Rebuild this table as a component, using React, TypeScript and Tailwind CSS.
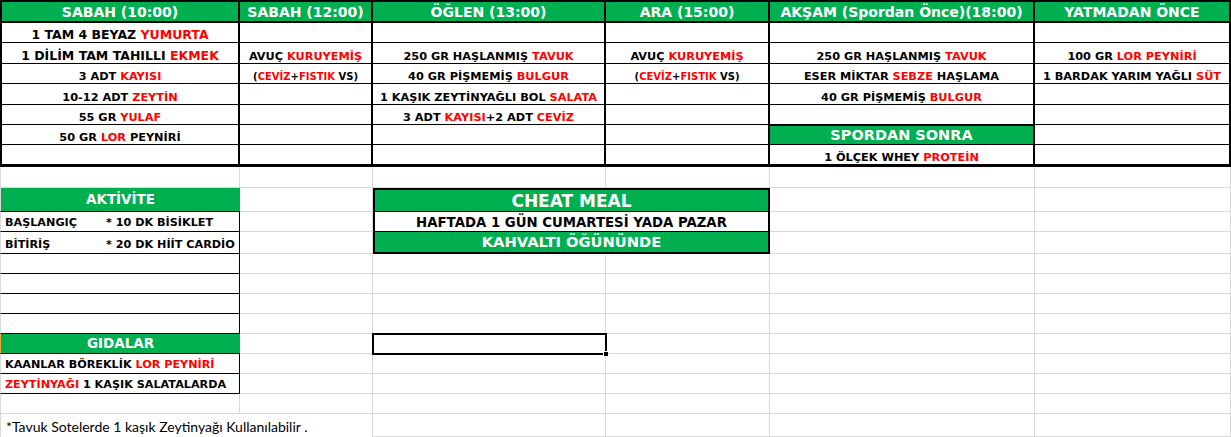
import type { ReactNode } from 'react';
import clsx from 'clsx';

const R = ({ children }: { children: ReactNode }) => <span className="text-[#ff0000]">{children}</span>;

const widths = ['w-[240px]', 'w-[133px]', 'w-[233px]', 'w-[164px]', 'w-[265px]', 'w-[196px]'];
const rowHeights = ['h-[20px]', 'h-[21px]', 'h-[20px]', 'h-[21px]', 'h-[20px]', 'h-[20px]', 'h-[22px]'];

const headers = ['SABAH (10:00)', 'SABAH (12:00)', 'ÖĞLEN (13:00)', 'ARA (15:00)', 'AKŞAM (Spordan Önce)(18:00)', 'YATMADAN ÖNCE'];

const nuts = (
  <span className="text-[10px]">
    (<R>CEVİZ</R>+<R>FISTIK</R> VS)
  </span>
);

const SPOR = 'spor';

const meals: ReactNode[][] = [
  [<span className="text-[12.5px]">1 TAM 4 BEYAZ <R>YUMURTA</R></span>, null, null, null, null, null],
  [
    <span className="text-[12.5px]">1 DİLİM TAM TAHILLI <R>EKMEK</R></span>,
    <>AVUÇ <R>KURUYEMİŞ</R></>,
    <>250 GR HAŞLANMIŞ <R>TAVUK</R></>,
    <>AVUÇ <R>KURUYEMİŞ</R></>,
    <>250 GR HAŞLANMIŞ <R>TAVUK</R></>,
    <>100 GR <R>LOR PEYNİRİ</R></>,
  ],
  [
    <>3 ADT <R>KAYISI</R></>,
    nuts,
    <>40 GR PİŞMEMİŞ <R>BULGUR</R></>,
    nuts,
    <>ESER MİKTAR <R>SEBZE</R> HAŞLAMA</>,
    <>1 BARDAK YARIM YAĞLI <R>SÜT</R></>,
  ],
  [<>10-12 ADT <R>ZEYTİN</R></>, null, <>1 KAŞIK ZEYTİNYAĞLI BOL <R>SALATA</R></>, null, <>40 GR PİŞMEMİŞ <R>BULGUR</R></>, null],
  [<>55 GR <R>YULAF</R></>, null, <>3 ADT <R>KAYISI</R>+2 ADT <R>CEVİZ</R></>, null, null, null],
  [<>50 GR <R>LOR</R> PEYNİRİ</>, null, null, null, SPOR, null],
  [null, null, null, null, <>1 ÖLÇEK WHEY <R>PROTEİN</R></>, null],
];

const colStart = ['col-start-1', 'col-start-2', 'col-start-3', 'col-start-4', 'col-start-5', 'col-start-6'];
const rowStart = [
  'row-start-1', 'row-start-2', 'row-start-3', 'row-start-4', 'row-start-5', 'row-start-6', 'row-start-7',
  'row-start-8', 'row-start-9', 'row-start-10', 'row-start-11', 'row-start-12', 'row-start-13',
];

const activity: [string, string][] = [
  ['BAŞLANGIÇ', '* 10 DK BİSİKLET'],
  ['BİTİRİŞ', '* 20 DK HİİT CARDİO'],
];

export default function App() {
  return (
    <div className="w-[1231px] h-[437px] overflow-hidden bg-white text-black font-['DejaVu_Sans',sans-serif] font-bold">
      {/* Meal plan table */}
      <div className="flex flex-col">
        <div className="flex h-[23px]">
          {headers.map((h, i) => (
            <div
              key={h}
              className={clsx(
                widths[i],
                'flex items-center justify-center pt-px bg-[#00b050] border-y-2 border-r-2 border-black text-[14px] leading-none text-white whitespace-nowrap',
                i === 0 && 'border-l-2'
              )}
            >
              {h}
            </div>
          ))}
        </div>
        {meals.map((row, r) => (
          <div key={r} className={clsx('flex', rowHeights[r])}>
            {row.map((cell, c) =>
              cell === SPOR ? (
                <div
                  key={c}
                  className={clsx(widths[c], 'flex items-center justify-center bg-[#00b050] border-t border-b border-r-2 border-black text-[14.5px] leading-none text-white')}
                >
                  SPORDAN SONRA
                </div>
              ) : (
                <div
                  key={c}
                  className={clsx(
                    widths[c],
                    'flex items-end justify-center pb-px border-r-2 border-black text-[11.3px] leading-none whitespace-nowrap',
                    r === meals.length - 1 ? 'border-b-[3px]' : 'border-b',
                    c === 0 && 'border-l-2'
                  )}
                >
                  <span>{cell}</span>
                </div>
              )
            )}
          </div>
        ))}
      </div>

      {/* Lower sheet area */}
      <div className="grid grid-cols-[240px_133px_233px_164px_265px_196px] grid-rows-[21px_24px_20px_22px_20px_20px_20px_20px_20px_20px_20px_20px_23px]">
        {rowStart.map((rs, r) =>
          colStart.map((cs, c) => (
            <div key={`${r}-${c}`} className={clsx(cs, rs, 'border-r border-b border-[#d9d9d9]', c === 0 && 'border-l')} />
          ))
        )}

        {/* AKTİVİTE block */}
        <div className="col-start-1 row-start-2 flex items-center justify-center pt-px bg-[#00b050] border-b border-l border-b-black border-l-[#d9d9d9] text-[13.5px] leading-none text-white">
          AKTİVİTE
        </div>
        {activity.map(([a, b], i) => (
          <div
            key={a}
            className={clsx(
              'col-start-1 flex items-end pb-[3px] pl-[4px] bg-white border-b border-r border-black border-l border-l-[#d9d9d9] text-[11.2px] leading-none whitespace-nowrap',
              i === 0 ? 'row-start-3' : 'row-start-4'
            )}
          >
            <span className="w-[101px]">{a}</span>
            <span>{b}</span>
          </div>
        ))}
        <div className="col-start-1 row-start-5 bg-white border-b border-r border-black border-l border-l-[#d9d9d9]" />
        <div className="col-start-1 row-start-6 bg-white border-b border-r border-black border-l border-l-[#d9d9d9]" />
        <div className="col-start-1 row-start-7 bg-white border-b border-r border-black border-l border-l-[#d9d9d9]" />
        <div className="col-start-1 row-start-8 bg-white border-b border-r border-black border-l border-l-[#d9d9d9]" />
        <div className="col-start-1 row-start-9 flex items-center justify-center pt-px bg-[#00b050] border-b border-l border-b-black border-l-[#f2a33a] text-[13.5px] leading-none text-white">
          GIDALAR
        </div>
        <div className="col-start-1 row-start-10 flex items-end pb-[3px] pl-[4px] bg-white border-b border-r border-black border-l border-l-[#d9d9d9] text-[11.2px] leading-none whitespace-nowrap">
          <span>
            KAANLAR BÖREKLİK <R>LOR PEYNİRİ</R>
          </span>
        </div>
        <div className="col-start-1 row-start-11 flex items-end pb-[3px] pl-[4px] bg-white border-b border-r border-black border-l border-l-[#d9d9d9] text-[11.2px] leading-none whitespace-nowrap">
          <span>
            <R>ZEYTİNYAĞI</R> 1 KAŞIK SALATALARDA
          </span>
        </div>

        {/* CHEAT MEAL block */}
        <div className="col-start-3 col-span-2 row-start-2 row-span-3 flex flex-col bg-white border-2 border-black">
          <div className="h-[22px] flex items-center justify-center pt-px bg-[#00b050] border-b border-black text-[17px] leading-none text-white">
            CHEAT MEAL
          </div>
          <div className="h-[20px] flex items-center justify-center pt-[2px] border-b border-black text-[13.3px] leading-none">
            HAFTADA 1 GÜN CUMARTESİ YADA PAZAR
          </div>
          <div className="flex-1 flex items-center justify-center pt-px bg-[#00b050] text-[14.7px] leading-none text-white">
            KAHVALTI ÖĞÜNÜNDE
          </div>
        </div>

        {/* Selected cell */}
        <div className="col-start-3 row-start-9 -m-px relative bg-white border-2 border-black">
          <div className="absolute -right-[4px] -bottom-[4px] w-[6px] h-[6px] bg-black border border-white" />
        </div>

        {/* Note */}
        <div className="col-start-1 col-span-2 row-start-13 flex items-center pl-[5px] pt-[2px] bg-white border-l border-r border-[#d9d9d9] font-['Lato',sans-serif] font-normal text-[14px] leading-none whitespace-nowrap">
          *Tavuk Sotelerde 1 kaşık Zeytinyağı Kullanılabilir .
        </div>
      </div>
    </div>
  );
}
